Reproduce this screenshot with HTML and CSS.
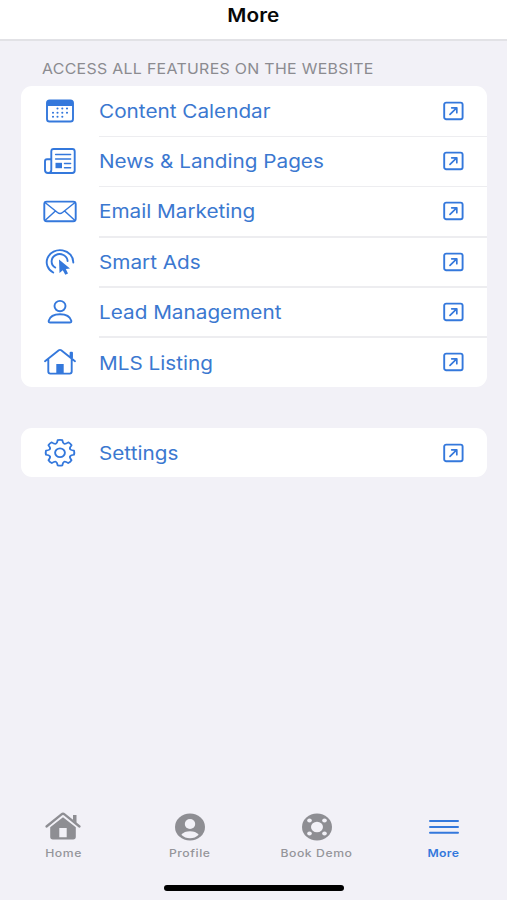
FILE: index.html
```html
<!DOCTYPE html>
<html lang="en">
<head>
<meta charset="utf-8">
<title>More</title>
<link rel="stylesheet" href="styles.css">
</head>
<body>
<svg class="defs" width="0" height="0">
  <symbol id="open" viewBox="0 0 22 20">
    <rect x="1.2" y="1.6" width="18.400" height="16.600" rx="2"/>
    <path class="arrow" d="M7 13.300L13.400 7.200M8.700 6.800H13.800V11.700"/>
  </symbol>
</svg>
<header class="title-bar"><h1>More</h1></header>
<main>
  <h2 class="caption">ACCESS ALL FEATURES ON THE WEBSITE</h2>
  <section class="card features">
    <a class="row">
      <svg class="icon" viewBox="0 0 36 30"><rect x="5" y="4.5" width="26" height="21" rx="2.6"/><path class="solid" d="M5 10V7q0-3 3-3h20q3 0 3 3v3z"/><path class="dots" d="M15.5 12.5h.01M20.3 12.5h.01M25 12.5h.01M11 16.7h.01M15.5 16.7h.01M20.3 16.7h.01M25 16.7h.01M11 20.8h.01M15.5 20.8h.01M20.3 20.8h.01"/></svg>
      <span class="label">Content Calendar</span><svg class="open"><use href="#open"/></svg>
    </a>
    <a class="row">
      <svg class="icon" viewBox="0 0 36 30"><path d="M9.3 24V5.4q0-2.4 2.4-2.4h18.6q2.4 0 2.4 2.4v19.2q0 2.4-2.4 2.4H6q-3 0-3-3V15.2q0-2 2-2h4.300M9.300 24q0 3-3 3"/><path class="thin" d="M13.600 8.600h15M13.600 13h15M22.500 17.400h6.100M22.500 21.700h6.100"/><path class="solid" d="M13.500 16.800h6.500v5.400h-6.500z"/></svg>
      <span class="label">News &amp; Landing Pages</span><svg class="open"><use href="#open"/></svg>
    </a>
    <a class="row">
      <svg class="icon" viewBox="0 0 36 30"><rect x="2.300" y="5.600" width="31.400" height="19.600" rx="2.500"/><path class="thin" d="M3 6.500L15.500 16.500q2.500 2 5 0L33 6.500M3 24.500L13.400 15M33 24.500L22.600 15"/></svg>
      <span class="label">Email Marketing</span><svg class="open"><use href="#open"/></svg>
    </a>
    <a class="row">
      <svg class="icon" viewBox="0 0 36 30"><path d="M11.200 25.500A13.300 12 0 1 1 31.300 15.500M13.200 20.500A8 7.300 0 1 1 25.600 14"/><path class="cursor" d="M17 12.600L17.500 26l3.300-2.700 2.500 4.500 2.700-1.200-2.200-4.500 4.200-.6z"/></svg>
      <span class="label">Smart Ads</span><svg class="open"><use href="#open"/></svg>
    </a>
    <a class="row">
      <svg class="icon" viewBox="0 0 36 30"><ellipse cx="18" cy="9.100" rx="5.500" ry="5.200"/><path d="M8.200 25.500q-1.800 0-1.500-1.800C8 19.200 12 17.200 18 17.200s10 2 11.300 6.500q.3 1.800-1.500 1.800z"/></svg>
      <span class="label">Lead Management</span><svg class="open"><use href="#open"/></svg>
    </a>
    <a class="row">
      <svg class="icon" viewBox="0 0 36 30"><path d="M3 14.200L16.800 3.300q1.200-.8 2.400 0L33 14.200M6.300 12v12.600q0 2 2 2h19.400q2 0 2-2V12M28.600 9.500V5.700h1.400v5"/><path class="solid" d="M14.300 17h7.400v9.600h-7.400z"/></svg>
      <span class="label mls">MLS Listing</span><svg class="open"><use href="#open"/></svg>
    </a>
  </section>
  <section class="card settings">
    <a class="row">
      <svg class="icon" viewBox="0 0 36 30"><g transform="translate(18 14.700) scale(1 .9)"><path d="M-2.300-14Q0-14.600 2.300-14C3-9.400 4.530-8.770 8.270-11.530Q10.400-10.400 11.530-8.270C8.770-4.530 9.400-3 14-2.300Q14.600 0 14 2.300C9.400 3 8.770 4.530 11.530 8.270Q10.400 10.400 8.270 11.530C4.530 8.770 3 9.400 2.300 14Q0 14.600-2.300 14C-3 9.400-4.530 8.770-8.270 11.530Q-10.400 10.400-11.530 8.270C-8.770 4.530-9.400 3-14 2.300Q-14.600 0-14-2.300C-9.400-3-8.770-4.530-11.530-8.270Q-10.400-10.400-8.270-11.530C-4.530-8.770-3-9.400-2.300-14Z"/><circle r="4.900"/></g></svg>
      <span class="label">Settings</span><svg class="open"><use href="#open"/></svg>
    </a>
  </section>
</main>
<nav class="tabs">
  <a class="tab">
    <svg class="tab-icon" viewBox="0 0 38 32"><path class="roof" d="M2.500 16.500L17.500 4.300q1.500-1.200 3 0l15 12.200"/><path d="M29 5h3.500v8L29 10.200z"/><path fill-rule="evenodd" d="M6.200 17.200L19 7.200l12.800 10v9.600q0 2.700-2.700 2.700H8.900q-2.700 0-2.700-2.700zM15.300 18v9.300h7.400V18z"/></svg>
    <span>Home</span>
  </a>
  <a class="tab">
    <svg class="tab-icon" viewBox="0 0 38 32"><ellipse cx="19" cy="17" rx="15" ry="13.600"/><ellipse class="hole" cx="19" cy="14" rx="5.200" ry="5"/><path class="hole" d="M10.300 24.700q3-3.400 8.700-3.400t8.700 3.400Q24 28.200 19 28.200t-8.700-3.500z"/></svg>
    <span>Profile</span>
  </a>
  <a class="tab">
    <svg class="tab-icon" viewBox="0 0 38 32"><ellipse cx="19" cy="17" rx="15" ry="13.600"/><g class="hole"><ellipse cx="19" cy="17" rx="6" ry="5.300"/><ellipse cx="11.500" cy="10.400" rx="2.300" ry="2"/><ellipse cx="26.500" cy="10.400" rx="2.300" ry="2"/><ellipse cx="11.500" cy="23.600" rx="2.300" ry="2"/><ellipse cx="26.500" cy="23.600" rx="2.300" ry="2"/></g></svg>
    <span>Book Demo</span>
  </a>
  <a class="tab active">
    <svg class="tab-icon" viewBox="0 0 38 32"><path class="menu" d="M5 11h28M5 16.900h28M5 22.800h28"/></svg>
    <span>More</span>
  </a>
</nav>
<div class="home-indicator"></div>
</body>
</html>
```
FILE: styles.css
```css
* { box-sizing: border-box; }
body {
  margin: 0;
  height: 900px;
  display: flex;
  flex-direction: column;
  background: #f2f1f7;
  font-family: Inter, "Liberation Sans", sans-serif;
  overflow: hidden;
}
.defs { display: none; }
.title-bar {
  height: 41px;
  flex: none;
  background: #fff;
  border-bottom: 2px solid #e2e2e6;
}
h1 {
  width: fit-content;
  margin: 0 auto;
  padding-top: 3px;
  line-height: 24px;
  font-size: 18.500px;
  font-weight: 600;
  letter-spacing: .1px;
  transform: scaleX(1.12);
  color: #080808;
}
main { flex: 1; padding: 18px 20px 0 21px; }
.caption {
  width: fit-content;
  margin: 0 0 7px 21px;
  line-height: 20px;
  font-size: 14.200px;
  font-weight: 400;
  letter-spacing: .28px;
  white-space: nowrap;
  transform: scaleX(1.12);
  transform-origin: left;
  color: #8b8b90;
}
.card {
  display: grid;
  background: #fff;
  border-radius: 11px;
}
.features { height: 301px; grid-template-rows: repeat(6, 1fr); }
.settings { height: 49px; margin-top: 41px; }
.row {
  position: relative;
  display: grid;
  grid-template-columns: 57px 1fr 44px;
  align-items: center;
  padding-left: 21px;
}
.row:not(:last-child)::after {
  content: "";
  position: absolute;
  right: 0;
  bottom: -1px;
  width: 388px;
  height: 1.500px;
  background: #ededf0;
}
.icon, .open {
  fill: none;
  stroke: #3478dc;
  stroke-width: 1.900;
  stroke-linecap: round;
  stroke-linejoin: round;
}
.icon { width: 36px; height: 30px; }
.open { width: 22px; height: 20px; }
.arrow { stroke-width: 1.700; }
.solid, .cursor { fill: #3478dc; stroke: none; }
.cursor { stroke: #fff; stroke-width: 1.200; paint-order: stroke; }
.dots { stroke-width: 2.100; }
.thin { stroke-width: 1.500; }
.label {
  justify-self: start;
  font-size: 18.500px;
  line-height: 26px;
  white-space: nowrap;
  transform: scaleX(1.12);
  transform-origin: left;
  color: #3b78d0;
}
.mls { padding-top: 2px; }
.tabs {
  flex: none;
  display: grid;
  grid-template-columns: repeat(4, 1fr);
  height: 75px;
}
.tab {
  display: flex;
  flex-direction: column;
  align-items: center;
  font-size: 11px;
  line-height: 14px;
  font-weight: 500;
  letter-spacing: .5px;
  color: #95959a;
}
.tab span { transform: scaleX(1.11); }
.tab-icon { width: 38px; height: 32px; margin-bottom: 4px; fill: #8e8e93; }
.tab-icon .hole { fill: #f2f1f7; }
.roof { fill: none; stroke: #8e8e93; stroke-width: 2.300; stroke-linecap: round; }
.menu { stroke: #3478dc; stroke-width: 2; stroke-linecap: round; }
.active { color: #3478dc; font-weight: 600; letter-spacing: .3px; }
.home-indicator {
  flex: none;
  width: 180px;
  height: 6px;
  margin: 0 auto 9px;
  border-radius: 3px;
  background: #000;
}
```
